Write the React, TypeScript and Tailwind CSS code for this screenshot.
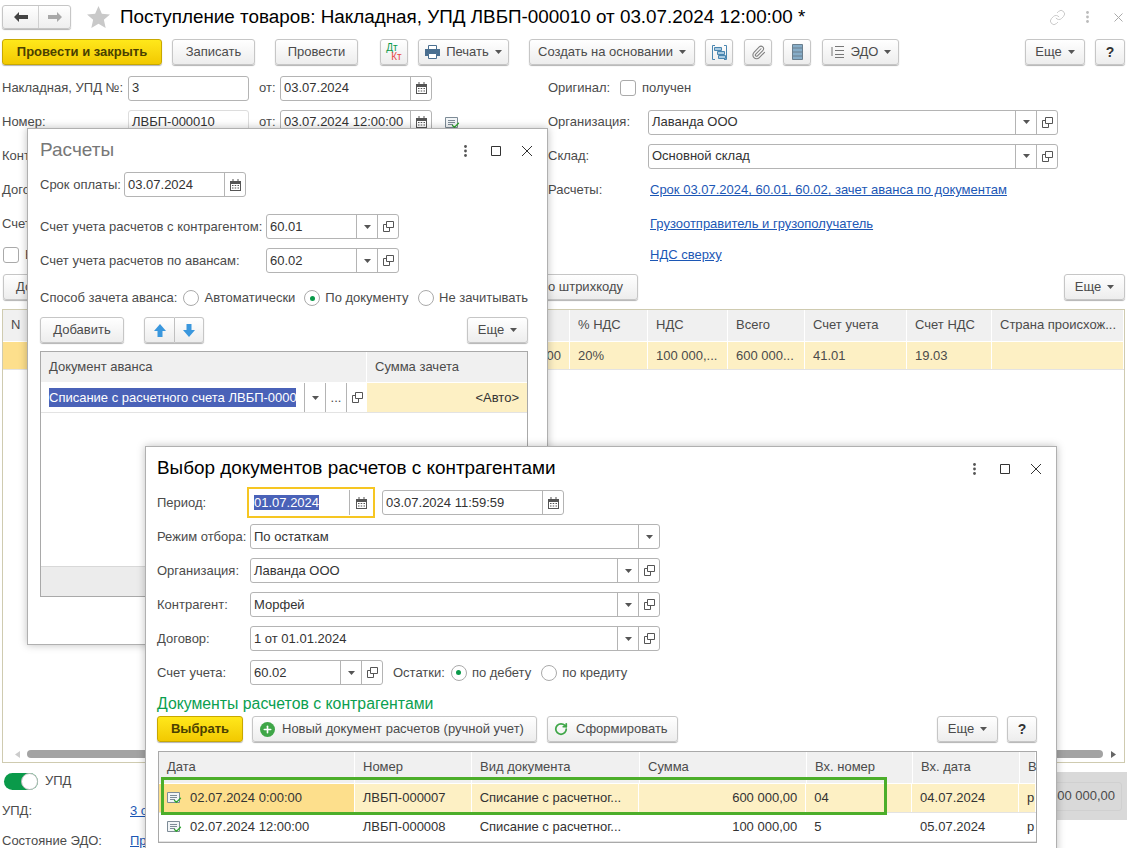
import type { ReactNode } from "react"
import { Check, RotateCw, Plus, Link as ChainIcon, Paperclip } from "lucide-react"

function Caret() {
  return (
    <svg width="7" height="4" viewBox="0 0 7 4" className="shrink-0">
      <path d="M0 0h7L3.5 4z" fill="#555" />
    </svg>
  )
}

function Calendar() {
  return (
    <svg width="11" height="12" viewBox="0 0 11 12">
      <path d="M0 2h11v10H0z" fill="#555" />
      <path d="M2.500 0h1v3h-1zM7.500 0h1v3h-1z" fill="#555" />
      <path d="M1 5h9v6H1z" fill="#fff" />
      <path d="M2 6h1.500v1H2zM4.700 6h1.500v1H4.700zM7.500 6H9v1H7.500zM2 8.500h1.500v1H2zM4.700 8.500h1.500v1H4.700zM7.500 8.500H9v1H7.500z" fill="#555" />
    </svg>
  )
}

function OpenIcon() {
  return (
    <svg width="11" height="11" viewBox="0 0 11 11" fill="none" stroke="#555">
      <path d="M3.500 .5h7v6h-7z" />
      <path d="M3.500 3.500h-3v7h6v-3.500" />
    </svg>
  )
}

function DocCheck() {
  return (
    <span className="relative block w-[15px] h-[13px] shrink-0">
      <svg width="13" height="11" viewBox="0 0 13 11" fill="none" stroke="#7d8b96">
        <path d="M.5.5h12v10H.5z" fill="#f2f5f7" />
        <path d="M3 3.500h7M3 5.500h7M3 7.500h5" />
      </svg>
      <Check size={9} strokeWidth={3.5} className="absolute right-0 bottom-0 text-[#2fa52f]" />
    </span>
  )
}

function Btn({
  children,
  className = "",
  primary = false,
}: {
  children: ReactNode
  className?: string
  primary?: boolean
}) {
  return (
    <div
      className={`flex items-center justify-center gap-1.5 rounded-[3px] border shrink-0 h-[26px] whitespace-nowrap shadow-[0_1px_1px_rgba(0,0,0,0.3)] ${
        primary
          ? "bg-gradient-to-b from-[#ffe81a] to-[#f2c900] border-[#c8a800] font-bold text-[#4a4000]"
          : "bg-gradient-to-b from-white to-[#ededed] border-[#c6c6c6] text-[#4b4b4b]"
      } ${className}`}
    >
      {children}
    </div>
  )
}

function Field({
  value,
  width,
  caret = false,
  open = false,
  cal = false,
  className = "",
}: {
  value: string
  width: string
  caret?: boolean
  open?: boolean
  cal?: boolean
  className?: string
}) {
  const cell = "flex items-center justify-center w-[21px] h-full border-l border-[#b4b4b4] shrink-0"
  return (
    <div className={`flex items-center h-[25px] bg-white border border-[#b4b4b4] rounded-[3px] shrink-0 ${width} ${className}`}>
      <div className="flex-1 min-w-0 pl-[3px] whitespace-nowrap overflow-hidden text-[#333]">{value}</div>
      {caret && (
        <div className={cell}>
          <Caret />
        </div>
      )}
      {open && (
        <div className={cell}>
          <OpenIcon />
        </div>
      )}
      {cal && (
        <div className={cell}>
          <Calendar />
        </div>
      )}
    </div>
  )
}

function Radio({ on = false, label }: { on?: boolean; label: string }) {
  return (
    <div className="flex items-center gap-[5px]">
      <span className="flex items-center justify-center w-[16px] h-[16px] rounded-full border border-[#aaa] bg-white">
        {on && <span className="w-[5px] h-[5px] rounded-full bg-[#0a9a4a]" />}
      </span>
      <span>{label}</span>
    </div>
  )
}

function MoreBtn({ className = "" }: { className?: string }) {
  return (
    <Btn className={className}>
      Еще <Caret />
    </Btn>
  )
}

function WindowControls() {
  return (
    <div className="flex items-center">
      <svg width="3" height="12" viewBox="0 0 3 12" fill="#555">
        <circle cx="1.500" cy="1.500" r="1.400" />
        <circle cx="1.500" cy="6" r="1.400" />
        <circle cx="1.500" cy="10.500" r="1.400" />
      </svg>
      <svg width="10" height="10" viewBox="0 0 10 10" fill="none" stroke="#333" className="ml-[24px]">
        <path d="M.5.5h9v9h-9z" />
      </svg>
      <svg width="12" height="12" viewBox="0 0 12 12" fill="none" stroke="#333" className="ml-[20px]">
        <path d="M1 1l10 10M11 1L1 11" />
      </svg>
    </div>
  )
}

function TopBar() {
  return (
    <>
      <div className="flex items-center h-[34px] pl-[2px] pr-[4px]">
        <div className="flex items-center w-[69px] h-[24px] rounded-[3px] border border-[#c6c6c6] bg-gradient-to-b from-white to-[#eee] shadow-[0_1px_1px_rgba(0,0,0,0.3)]">
          <div className="flex items-center justify-center w-[36px] h-full border-r border-[#d0d0d0]">
            <svg width="14" height="10" viewBox="0 0 14 10" fill="#444">
              <path d="M0 5l5-5v3h9v4H5v3z" />
            </svg>
          </div>
          <div className="flex items-center justify-center flex-1">
            <svg width="14" height="10" viewBox="0 0 14 10" fill="#a9a9a9">
              <path d="M14 5L9 0v3H0v4h9v3z" />
            </svg>
          </div>
        </div>
        <svg width="23" height="22" viewBox="0 0 24 23" fill="#c9c9c9" className="ml-[16px]">
          <path d="M12 0l3.500 8 8.500.8-6.400 5.700 1.900 8.500L12 18.500 4.500 23l1.900-8.500L0 8.800 8.500 8z" />
        </svg>
        <div className="ml-[10px] text-[18.85px] leading-none text-black whitespace-nowrap">
          Поступление товаров: Накладная, УПД ЛВБП-000010 от 03.07.2024 12:00:00 *
        </div>
        <div className="ml-auto flex items-center">
          <ChainIcon size={17} strokeWidth={1.2} className="text-[#c2c2c2]" />
          <svg width="3" height="12" viewBox="0 0 3 12" fill="#bbb" className="ml-[20px]">
            <circle cx="1.500" cy="1.500" r="1.400" />
            <circle cx="1.500" cy="6" r="1.400" />
            <circle cx="1.500" cy="10.500" r="1.400" />
          </svg>
          <svg width="9" height="9" viewBox="0 0 9 9" fill="none" stroke="#aaa" className="ml-[25px]">
            <path d="M.5.5l8 8M8.500.5l-8 8" />
          </svg>
        </div>
      </div>
      <div className="flex items-center mt-[5px] pl-[2px] pr-[2px]">
        <Btn primary className="w-[160px]">Провести и закрыть</Btn>
        <Btn className="w-[83px] ml-[10px]">Записать</Btn>
        <Btn className="w-[83px] ml-[20px]">Провести</Btn>
        <Btn className="w-[28px] ml-[22px]">
          <span className="flex flex-col text-[10px] leading-[9px] font-medium">
            <span className="text-[#0a9a4a]">Дт</span>
            <span className="text-[#e84a4a] pl-[5px]">Кт</span>
          </span>
        </Btn>
        <Btn className="w-[91px] ml-[10px]">
          <svg width="15" height="14" viewBox="0 0 15 14">
            <path d="M3.500.5h8v4h-8z" fill="#fff" stroke="#4a6f90" />
            <path d="M0 4h15v7H0z" fill="#4a6f90" />
            <path d="M3.500 8.500h8v5h-8z" fill="#fff" stroke="#4a6f90" />
          </svg>
          Печать <Caret />
        </Btn>
        <Btn className="w-[166px] ml-[20px]">Создать на основании <Caret /></Btn>
        <Btn className="w-[28px] ml-[10px]">
          <svg width="15" height="15" viewBox="0 0 15 15" fill="none" stroke="#4a86b0">
            <path d="M3 .5H.5v14H3M12 .5h2.500v14H12" />
            <path d="M2.500 2.500h7v3h-7zM5.500 6.500h7v3h-7z" fill="#a9cbe2" />
            <path d="M6.500 10.500h7v3h-7z" fill="#a9cbe2" />
          </svg>
        </Btn>
        <Btn className="w-[28px] ml-[11px]">
          <Paperclip size={15} strokeWidth={1.7} className="text-[#808080]" />
        </Btn>
        <Btn className="w-[28px] ml-[11px]">
          <svg width="11" height="16" viewBox="0 0 11 16" fill="#86adc8" stroke="#6a7f8e">
            <path d="M.5.5h10v15H.5z" />
            <path d="M.5 4h10M.5 8h10M.5 12h10" />
          </svg>
        </Btn>
        <Btn className="w-[77px] ml-[11px]">
          <svg width="15" height="14" viewBox="0 0 15 14" fill="none" stroke="#777">
            <path d="M5 1.500h9M5 5.500h9M5 9.500h9M5 12.500h9M2 2v9" />
          </svg>
          ЭДО <Caret />
        </Btn>
        <MoreBtn className="w-[60px] ml-auto" />
        <Btn className="w-[30px] ml-[10px] font-bold text-[14px] text-[#333]">?</Btn>
      </div>
    </>
  )
}

function FormRow({ children, h = "h-[34px]" }: { children: ReactNode; h?: string }) {
  return <div className={`flex items-center ${h} whitespace-nowrap`}>{children}</div>
}

function Link({ children }: { children: ReactNode }) {
  return <span className="text-[#1c57b5] underline">{children}</span>
}

function HeadForm() {
  return (
    <div className="flex mt-[6px] pl-[2px]">
      <div className="w-[546px] shrink-0">
        <FormRow>
          <span className="w-[126px]">Накладная, УПД №:</span>
          <Field value="3" width="w-[121px]" />
          <span className="ml-[10px] w-[21px]">от:</span>
          <Field value="03.07.2024" width="w-[152px]" cal />
        </FormRow>
        <FormRow>
          <span className="w-[126px]">Номер:</span>
          <Field value="ЛВБП-000010" width="w-[121px]" className="border-[#ddd]" />
          <span className="ml-[10px] w-[21px]">от:</span>
          <Field value="03.07.2024 12:00:00" width="w-[152px]" cal />
          <span className="ml-[13px] mt-[3px]">
            <DocCheck />
          </span>
        </FormRow>
        <FormRow>Контрагент:</FormRow>
        <FormRow>Договор:</FormRow>
        <FormRow>Счет на оплату:</FormRow>
        <FormRow h="h-[28px]">
          <span className="w-[16px] h-[16px] rounded-[3px] border border-[#aaa] mr-[6px] ml-[1px]" />
          Без НДС
        </FormRow>
      </div>
      <div className="flex-1">
        <FormRow>
          <span className="w-[72px]">Оригинал:</span>
          <span className="w-[16px] h-[16px] rounded-[3px] border border-[#aaa] mr-[6px]" />
          получен
        </FormRow>
        <FormRow>
          <span className="w-[100px]">Организация:</span>
          <Field value="Лаванда ООО" width="w-[410px]" caret open />
        </FormRow>
        <FormRow>
          <span className="w-[100px]">Склад:</span>
          <Field value="Основной склад" width="w-[410px]" caret open />
        </FormRow>
        <FormRow>
          <span className="w-[102px]">Расчеты:</span>
          <Link>Срок 03.07.2024, 60.01, 60.02, зачет аванса по документам</Link>
        </FormRow>
        <FormRow>
          <span className="w-[102px]" />
          <Link>Грузоотправитель и грузополучатель</Link>
        </FormRow>
        <FormRow h="h-[28px]">
          <span className="w-[102px]" />
          <Link>НДС сверху</Link>
        </FormRow>
      </div>
    </div>
  )
}

// the middle columns sit behind the dialog, only the tail of the sum shows
const mainCols = [
  { t: "N", w: "w-[26px]", v: "" },
  { t: "", w: "w-[440px]", v: "" },
  { t: "", w: "w-[101px]", v: "500 000,00", right: true },
  { t: "% НДС", w: "w-[78px]", v: "20%" },
  { t: "НДС", w: "w-[80px]", v: "100 000,..." },
  { t: "Всего", w: "w-[77px]", v: "600 000..." },
  { t: "Счет учета", w: "w-[102px]", v: "41.01" },
  { t: "Счет НДС", w: "w-[85px]", v: "19.03" },
  { t: "Страна происхож...", w: "flex-1", v: "" },
]

function MainTable() {
  return (
    <div className="mx-[2px] mt-[9px] h-[454px] border border-[#cfcbb0] flex flex-col">
      <div className="flex h-[32px]">
        {mainCols.map((c, i) => (
          <div key={i} className={`${c.w} min-w-0 flex items-center pl-[8px] pb-[2px] bg-[#f0f0f0] border-r border-b border-white whitespace-nowrap overflow-hidden`}>
            {c.t}
          </div>
        ))}
      </div>
      <div className="flex h-[28px] border-b border-[#e3e3e3]">
        {mainCols.map((c, i) => (
          <div
            key={i}
            className={`${c.w} min-w-0 flex items-center px-[8px] border-r border-white whitespace-nowrap overflow-hidden ${i === 0 ? "bg-[#fddf8c]" : "bg-[#fdf0c4]"} ${c.right ? "justify-end" : ""}`}
          >
            {c.v}
          </div>
        ))}
      </div>
      <div className="flex-1" />
      <div className="flex items-center h-[14px] pl-[12px] pr-[8px] mb-[1px]">
        <svg width="5" height="7" viewBox="0 0 5 7" fill="#ccc">
          <path d="M5 0v7L0 3.500z" />
        </svg>
        <div className="ml-[7px] flex-1 h-[8px] rounded-full bg-[#a3a3a3] mr-[8px]" />
        <svg width="5" height="7" viewBox="0 0 5 7" fill="#666">
          <path d="M0 0v7l5-3.500z" />
        </svg>
      </div>
    </div>
  )
}

function Footer() {
  return (
    <div className="flex justify-between pl-[2px]">
      <div>
        <div className="flex items-center h-[30px] mt-[3px] pl-[2px]">
          <span className="relative flex items-center w-[34px] h-[17px] rounded-full bg-[#0a9a4a]">
            <span className="absolute right-0 w-[17px] h-[17px] rounded-full bg-white border border-[#bbb]" />
          </span>
          <span className="ml-[7px]">УПД</span>
        </div>
        <div className="flex items-center h-[30px]">
          <span className="w-[128px]">УПД:</span>
          <Link>3 от 03.07.2024</Link>
        </div>
        <div className="flex items-center h-[30px]">
          <span className="w-[128px]">Состояние ЭДО:</span>
          <Link>Просмотреть</Link>
        </div>
      </div>
      <div className="flex items-center h-[48px] mt-[9px] pl-[6px] pr-[5px] bg-[#d9d9d9]">
        <span className="pr-[6px] h-[29px] flex items-center border border-[#d0d0d0] rounded-[3px] whitespace-nowrap">600 000,00</span>
      </div>
    </div>
  )
}

function RaschetyWindow() {
  return (
    <div className="absolute left-[27px] top-[128px] w-[521px] h-[517px] bg-white border border-[#b0b0b0] shadow-[0_0_8px_rgba(0,0,0,0.25)] pl-[12px] pr-[19px] text-[#4b4b4b]">
      <div className="flex items-center justify-between h-[43px]">
        <span className="text-[19px] text-[#777]">Расчеты</span>
        <div className="mr-[-5px]">
          <WindowControls />
        </div>
      </div>
      <div className="flex items-center whitespace-nowrap">
        <span className="w-[84px]">Срок оплаты:</span>
        <Field value="03.07.2024" width="w-[122px]" cal />
      </div>
      <div className="flex items-center mt-[17px] whitespace-nowrap">
        <span className="w-[226px]">Счет учета расчетов с контрагентом:</span>
        <Field value="60.01" width="w-[133px]" caret open />
      </div>
      <div className="flex items-center mt-[9px] whitespace-nowrap">
        <span className="w-[226px]">Счет учета расчетов по авансам:</span>
        <Field value="60.02" width="w-[133px]" caret open />
      </div>
      <div className="flex items-center mt-[17px] h-[16px] whitespace-nowrap">
        <span className="mr-[6px]">Способ зачета аванса:</span>
        <Radio label="Автоматически" />
        <span className="w-[12px]" />
        <Radio on label="По документу" />
        <span className="w-[13px]" />
        <Radio label="Не зачитывать" />
      </div>
      <div className="flex items-center mt-[11px]">
        <Btn className="w-[84px]">Добавить</Btn>
        <div className="flex ml-[20px]">
          <Btn className="w-[31px] rounded-r-none">
            <svg width="12" height="13" viewBox="0 0 12 13" fill="#3a97dd">
              <path d="M6 0l6 7H8.500v6h-5V7H0z" />
            </svg>
          </Btn>
          <Btn className="w-[29px] rounded-l-none border-l-0">
            <svg width="12" height="13" viewBox="0 0 12 13" fill="#3a97dd">
              <path d="M6 13L0 6h3.500V0h5v6H12z" />
            </svg>
          </Btn>
        </div>
        <MoreBtn className="w-[61px] ml-auto" />
      </div>
      <div className="mt-[8px] h-[246px] border border-[#a9a9a9] flex flex-col">
        <div className="flex h-[31px] bg-[#f0f0f0] border-b border-white">
          <div className="w-[326px] flex items-center pl-[8px] border-r border-white">Документ аванса</div>
          <div className="flex-1 flex items-center pl-[8px]">Сумма зачета</div>
        </div>
        <div className="flex h-[30px] border-b border-[#e3e3e3]">
          <div className="flex items-center w-[326px] pl-[8px]">
            <span className="w-[247px] overflow-hidden whitespace-nowrap bg-[#4a62b8] text-white shrink-0">
              Списание с расчетного счета ЛВБП-0000
            </span>
            <div className="flex items-center justify-center w-[21px] h-full ml-[8px] border-l border-[#b4b4b4] shrink-0">
              <Caret />
            </div>
            <div className="flex items-center justify-center w-[21px] h-full border-l border-[#b4b4b4] shrink-0">...</div>
            <div className="flex items-center justify-center w-[21px] h-full border-l border-[#b4b4b4] shrink-0">
              <OpenIcon />
            </div>
          </div>
          <div className="flex-1 flex items-center justify-end pr-[8px] bg-[#fdf0c4] text-[#333]">&lt;Авто&gt;</div>
        </div>
        <div className="flex-1" />
        <div className="h-[30px] bg-[#ececec] border-t border-[#d8d8d8]" />
      </div>
    </div>
  )
}

function LabelRow({ label, children }: { label: string; children: ReactNode }) {
  return (
    <div className="flex items-center mt-[9px] whitespace-nowrap">
      <span className="w-[93px] shrink-0">{label}</span>
      {children}
    </div>
  )
}

const docCols = [
  { t: "Дата", w: "w-[196px]" },
  { t: "Номер", w: "w-[117px]" },
  { t: "Вид документа", w: "w-[168px]" },
  { t: "Сумма", w: "w-[167px]" },
  { t: "Вх. номер", w: "w-[106px]" },
  { t: "Вх. дата", w: "w-[107px]" },
  { t: "В", w: "flex-1" },
]

const docRows = [
  ["02.07.2024 0:00:00", "ЛВБП-000007", "Списание с расчетног...", "600 000,00", "04", "04.07.2024", "р"],
  ["02.07.2024 12:00:00", "ЛВБП-000008", "Списание с расчетног...", "100 000,00", "5", "05.07.2024", "р"],
]

function VyborWindow() {
  return (
    <div className="absolute left-[145px] top-[446px] w-[912px] h-[420px] bg-white border border-[#b0b0b0] shadow-[0_0_8px_rgba(0,0,0,0.25)] pl-[11px] pr-[19px] text-[#4b4b4b]">
      <div className="flex items-center justify-between h-[43px]">
        <span className="text-[18.9px] text-black">Выбор документов расчетов с контрагентами</span>
        <div className="mr-[-5px]">
          <WindowControls />
        </div>
      </div>
      <div className="flex items-center h-[25px] whitespace-nowrap">
        <span className="w-[90px] shrink-0">Период:</span>
        <div className="border-2 border-[#f6c622] p-[1px] -my-[3px] w-[128px] shrink-0">
          <div className="flex items-center h-[25px]">
            <div className="flex-1 pl-[4px]">
              <span className="bg-[#4a62b8] text-white">01.07.2024</span>
            </div>
            <div className="flex items-center justify-center w-[23px] h-full border-l border-[#b4b4b4]">
              <Calendar />
            </div>
          </div>
        </div>
        <Field value="03.07.2024 11:59:59" width="w-[182px]" cal className="ml-[7px]" />
      </div>
      <LabelRow label="Режим отбора:">
        <Field value="По остаткам" width="w-[410px]" caret />
      </LabelRow>
      <LabelRow label="Организация:">
        <Field value="Лаванда ООО" width="w-[410px]" caret open />
      </LabelRow>
      <LabelRow label="Контрагент:">
        <Field value="Морфей" width="w-[410px]" caret open />
      </LabelRow>
      <LabelRow label="Договор:">
        <Field value="1 от 01.01.2024" width="w-[410px]" caret open />
      </LabelRow>
      <LabelRow label="Счет учета:">
        <Field value="60.02" width="w-[133px]" caret open />
        <span className="ml-[10px] mr-[6px]">Остатки:</span>
        <Radio on label="по дебету" />
        <span className="w-[10px]" />
        <Radio label="по кредиту" />
      </LabelRow>
      <div className="mt-[9px] text-[15.8px] leading-[20px] text-[#0aa050]">Документы расчетов с контрагентами</div>
      <div className="flex items-center mt-[2px]">
        <Btn primary className="w-[86px]">Выбрать</Btn>
        <Btn className="w-[285px] ml-[9px] gap-[7px] justify-start pl-[7px]">
          <span className="flex items-center justify-center w-[15px] h-[15px] rounded-full bg-[#3fa648]">
            <Plus size={11} strokeWidth={3.5} className="text-white" />
          </span>
          Новый документ расчетов (ручной учет)
        </Btn>
        <Btn className="w-[131px] ml-[10px] gap-[8px] justify-start pl-[6px]">
          <RotateCw size={14} strokeWidth={3} className="text-[#3fa648]" />
          Сформировать
        </Btn>
        <MoreBtn className="w-[61px] ml-auto" />
        <Btn className="w-[30px] ml-[9px] font-bold text-[14px] text-[#333]">?</Btn>
      </div>
      <div className="relative mt-[9px] ml-[1px] border border-[#a9a9a9]">
        <div className="flex h-[32px]">
          {docCols.map((c) => (
            <div key={c.t} className={`${c.w} min-w-0 flex items-center pl-[8px] pb-[2px] bg-[#f0f0f0] border-r border-b border-white`}>
              {c.t}
            </div>
          ))}
        </div>
        {docRows.map((row, r) => (
          <div key={row[1]} className="flex h-[29px] border-b border-[#e3e3e3]">
            {docCols.map((c, i) => (
              <div
                key={c.t}
                className={`${c.w} min-w-0 flex items-center pl-[8px] pr-[8px] border-r border-white whitespace-nowrap overflow-hidden text-[#333] ${
                  r === 0 ? (i === 0 ? "bg-[#fddf8c]" : "bg-[#fdf0c4]") : "bg-white"
                } ${i === 3 ? "justify-end" : ""} ${i === 0 ? "gap-[8px]" : ""}`}
              >
                {i === 0 && <DocCheck />}
                {row[i]}
              </div>
            ))}
          </div>
        ))}
        <div className="absolute left-[2px] top-[25px] w-[726px] h-[38px] border-[3px] border-[#4cae2a]" />
      </div>
    </div>
  )
}

export default function App() {
  return (
    <div
      className="relative w-[1127px] h-[848px] overflow-hidden bg-white text-[13px] text-[#4b4b4b]"
      style={{ fontFamily: '"Liberation Sans", Arial, sans-serif' }}
    >
      <TopBar />
      <HeadForm />
      <div className="flex items-center justify-between ml-[3px] mr-[2px] mt-[5px]">
        <Btn className="w-[635px] justify-end pr-[14px]">
          <span className="mr-auto pl-[12px]">Добавить</span>
          Подбор по штрихкоду
        </Btn>
        <MoreBtn className="w-[61px]" />
      </div>
      <MainTable />
      <Footer />
      <RaschetyWindow />
      <VyborWindow />
    </div>
  )
}
